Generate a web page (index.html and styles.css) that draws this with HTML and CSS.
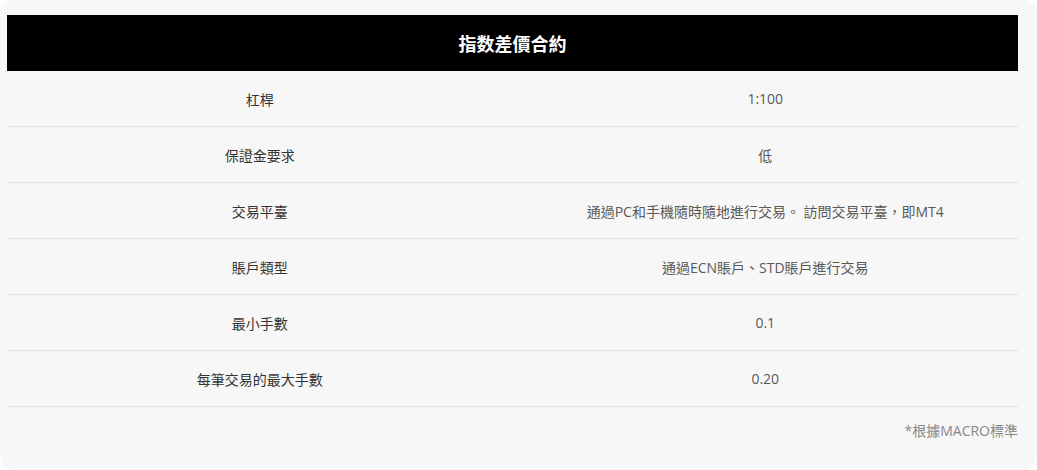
FILE: index.html
```html
<!DOCTYPE html>
<html lang="zh-Hant">
<head>
<meta charset="utf-8">
<link rel="stylesheet" href="styles.css">
</head>
<body>
<div class="card">
  <div class="table">
    <div class="head">指数差價合約</div>
    <div class="row"><div class="cell key">杠桿</div><div class="cell val">1:100</div></div>
    <div class="row"><div class="cell key">保證金要求</div><div class="cell val">低</div></div>
    <div class="row"><div class="cell key">交易平臺</div><div class="cell val">通過PC和手機隨時隨地進行交易。 訪問交易平臺，即MT4</div></div>
    <div class="row"><div class="cell key">賬戶類型</div><div class="cell val">通過ECN賬戶、STD賬戶進行交易</div></div>
    <div class="row"><div class="cell key">最小手數</div><div class="cell val">0.1</div></div>
    <div class="row"><div class="cell key">每筆交易的最大手數</div><div class="cell val">0.20</div></div>
  </div>
  <div class="note">*根據MACRO標準</div>
</div>
</body>
</html>
```
FILE: styles.css
```css
html, body {
  margin: 0;
  padding: 0;
  background: #ffffff;
}
body {
  font-family: "Open Sans", "Noto Sans CJK TC", sans-serif;
  font-size: 14px;
}
.card {
  box-sizing: border-box;
  width: 1037px;
  height: 470px;
  background: #f7f7f7;
  border-radius: 14px;
  padding: 15px 19px 0 7px;
}
.head {
  height: 56px;
  background: #000;
  color: #fff;
  font-weight: 700;
  font-size: 18px;
  display: flex;
  align-items: center;
  justify-content: center;
  font-family: "Noto Sans CJK TC", sans-serif;
}
.row {
  display: grid;
  grid-template-columns: 1fr 1fr;
  height: 55px;
  border-bottom: 1px solid #e2e2e2;
}
.cell {
  display: flex;
  align-items: center;
  justify-content: center;
}
.key {
  color: #333;
}
.val {
  color: #595959;
}
.note {
  text-align: right;
  color: #888;
  padding-top: 14px;
  line-height: 20px;
}
```
